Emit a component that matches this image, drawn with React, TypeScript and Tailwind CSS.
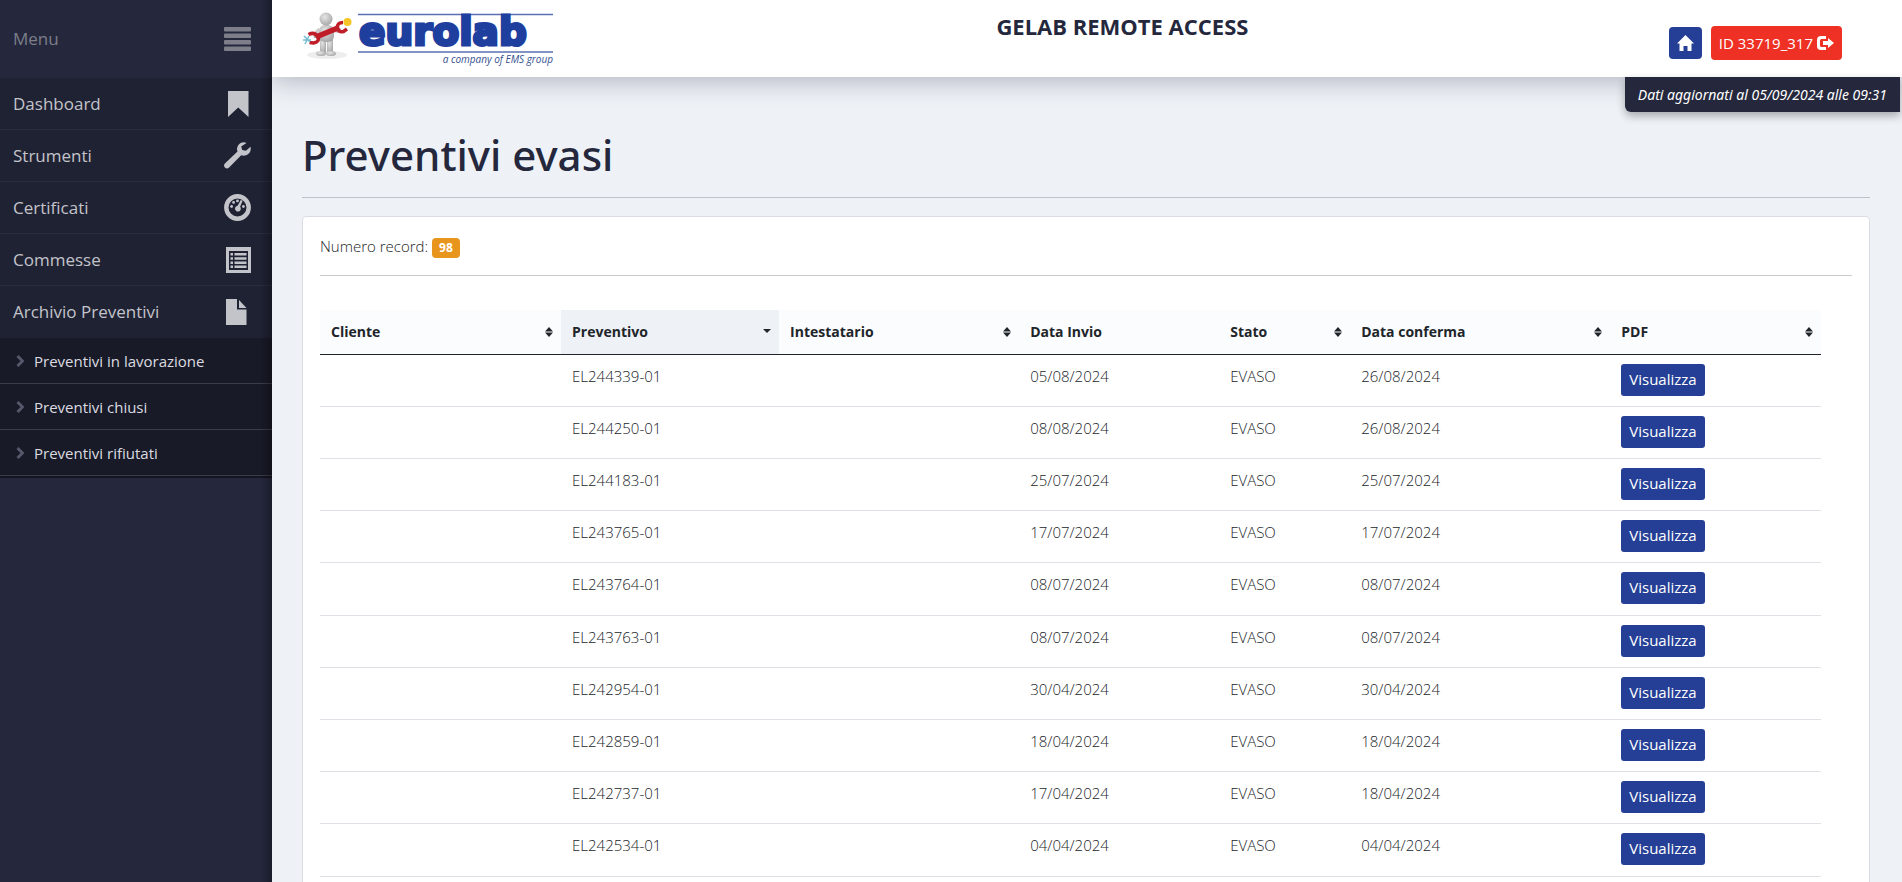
import type { ReactNode } from "react";

type MenuItem = { label: string; icon: ReactNode };

const icons = {
  bookmark: (
    <svg viewBox="0 0 26 26" className="h-[26px] w-[26px]" fill="currentColor">
      <path d="M3 0h20.500v26L13.250 16.500 3 26z" />
    </svg>
  ),
  wrench: (
    <svg viewBox="0 0 27 27" className="h-[27px] w-[27px]" fill="currentColor">
      <path d="M22.500 .9C19.500 -.4 16 .5 14.200 3.200 12.800 5.300 12.700 7.500 13.500 9.600L.9 21.400c-1.200 1.200-1.200 2.900 0 4.100s3 1.200 4.200 0L17.200 13.200c2.400.9 5 .5 7-1.200 2.200-1.900 3-4.600 2.300-7.200l-4.600 4-3.700-.8-1-3.600z" />
    </svg>
  ),
  gauge: (
    <svg viewBox="0 0 27 27" className="h-[27px] w-[27px]" fill="currentColor">
      <circle cx="13.500" cy="13.500" r="11.200" fill="none" stroke="currentColor" strokeWidth="4.400" />
      <circle cx="7.600" cy="12.500" r="1.400" />
      <circle cx="9.600" cy="8.400" r="1.400" />
      <circle cx="13.500" cy="6.900" r="1.400" />
      <circle cx="19.400" cy="12.500" r="1.400" />
      <path d="M16.800 6l1.800.8-2.500 6a2.900 2.900 0 1 1-2.500-1z" />
    </svg>
  ),
  list: (
    <svg viewBox="0 0 26 26" className="h-[26px] w-[26px]" fill="currentColor">
      <path fillRule="evenodd" d="M1 0h25v26H1zM4 4v19h19V4z" />
      <path d="M5.500 6h2.500v2.500H5.500zM9.500 6h12v2.500h-12zM5.500 10.200h2.500v2.500H5.500zM9.500 10.200h12v2.500h-12zM5.500 14.400h2.500v2.500H5.500zM9.500 14.400h12v2.500h-12zM5.500 18.600h2.500v2.500H5.500zM9.500 18.600h12v2.500h-12z" />
    </svg>
  ),
  file: (
    <svg viewBox="0 0 26 26" className="h-[26px] w-[26px]" fill="currentColor">
      <path d="M1 0h11v10.500h9.500V26H1z" />
      <path d="M14 1l7.500 8H14z" />
    </svg>
  ),
};

const menu: MenuItem[] = [
  { label: "Dashboard", icon: icons.bookmark },
  { label: "Strumenti", icon: icons.wrench },
  { label: "Certificati", icon: icons.gauge },
  { label: "Commesse", icon: icons.list },
  { label: "Archivio Preventivi", icon: icons.file },
];

const submenu = ["Preventivi in lavorazione", "Preventivi chiusi", "Preventivi rifiutati"];

const columns = [
  { label: "Cliente", width: "w-[241px]", sort: "both" },
  { label: "Preventivo", width: "w-[218px]", sort: "desc" },
  { label: "Intestatario", width: "w-[240px]", sort: "both" },
  { label: "Data Invio", width: "w-[200px]", sort: "none" },
  { label: "Stato", width: "w-[131px]", sort: "both" },
  { label: "Data conferma", width: "w-[260px]", sort: "both" },
  { label: "PDF", width: "w-[211px]", sort: "both" },
];

const quotes = [
  { code: "EL244339-01", sent: "05/08/2024", confirmed: "26/08/2024" },
  { code: "EL244250-01", sent: "08/08/2024", confirmed: "26/08/2024" },
  { code: "EL244183-01", sent: "25/07/2024", confirmed: "25/07/2024" },
  { code: "EL243765-01", sent: "17/07/2024", confirmed: "17/07/2024" },
  { code: "EL243764-01", sent: "08/07/2024", confirmed: "08/07/2024" },
  { code: "EL243763-01", sent: "08/07/2024", confirmed: "08/07/2024" },
  { code: "EL242954-01", sent: "30/04/2024", confirmed: "30/04/2024" },
  { code: "EL242859-01", sent: "18/04/2024", confirmed: "18/04/2024" },
  { code: "EL242737-01", sent: "17/04/2024", confirmed: "18/04/2024" },
  { code: "EL242534-01", sent: "04/04/2024", confirmed: "04/04/2024" },
];

function Sidebar() {
  return (
    <nav className="relative z-20 w-[272px] shrink-0 bg-[#25283d]">
      <div className="flex h-[78px] items-center justify-between pr-[21px] pl-[13px] text-[17px] text-[#7d7e8a]">
        Menu
        <svg viewBox="0 0 27 24" className="h-6 w-[27px]" fill="currentColor">
          <rect width="27" height="4.500" rx="1" />
          <rect y="6.500" width="27" height="4.500" rx="1" />
          <rect y="13" width="27" height="4.500" rx="1" />
          <rect y="19.500" width="27" height="4.500" rx="1" />
        </svg>
      </div>
      <ul className="bg-black/15">
        {menu.map((item) => (
          <li key={item.label} className="border-b border-white/5 last:border-transparent">
            <a href="#" className="flex h-[51px] items-center justify-between pr-[21px] pl-[13px] text-[17px] text-[#c3c4ca]">
              {item.label}
              {item.icon}
            </a>
          </li>
        ))}
      </ul>
      <ul className="border-b-2 border-black/15 bg-black/35">
        {submenu.map((label) => (
          <li key={label} className="border-b border-white/15">
            <a href="#" className="flex h-[45px] items-center gap-[10px] pt-px pl-4 text-[15px] text-[#dcdce0]">
              <svg viewBox="0 0 8 12" className="h-3 w-2" fill="none" stroke="#55576a" strokeWidth="3">
                <path d="M1.500 1L6.500 6l-5 5" />
              </svg>
              {label}
            </a>
          </li>
        ))}
      </ul>
      <div className="pointer-events-none absolute inset-y-0 right-0 w-3 bg-linear-to-l from-black/30 to-transparent" />
    </nav>
  );
}

function Logo() {
  return (
    <svg viewBox="0 0 254 68" className="h-[68px] w-[254px]" role="img" aria-label="eurolab">
      <defs>
        <radialGradient id="body" cx="0.4" cy="0.35" r="0.7">
          <stop offset="0" stopColor="#e6e6e6" />
          <stop offset="1" stopColor="#a4a4a4" />
        </radialGradient>
      </defs>
      <ellipse cx="24" cy="51" rx="20" ry="4" fill="#ededed" />
      <g fill="url(#body)">
        <path d="M16 24c-4 2-6 6-5 10h4l3-5zM30 24c3-1 6-1 8 1l-2 4-6-1z" />
        <rect x="17" y="32" width="6" height="18" rx="3" />
        <rect x="24" y="32" width="6" height="18" rx="3" />
        <ellipse cx="18" cy="49.500" rx="5" ry="2.500" />
        <ellipse cx="28" cy="49.500" rx="5" ry="2.500" />
        <rect x="16" y="21" width="15" height="17" rx="6" />
        <circle cx="23" cy="15" r="6.500" />
      </g>
      <path d="M13 33L36 23.500" stroke="#bf1e28" strokeWidth="5.500" />
      <path d="M5.500 30.500q6-3 9 2t-4 6.500l-4-.5" fill="none" stroke="#bf1e28" strokeWidth="3.500" />
      <path d="M40 18.500q-6 0-5.500 5t6 4l3.500-2.500" fill="none" stroke="#bf1e28" strokeWidth="3.500" />
      <circle cx="44.500" cy="18" r="4" fill="#f7c427" />
      <path d="M1 32l6 6M6 32l-4 8M0 36h8" stroke="#76bdd4" strokeWidth="1.500" />
      <path d="M55 10.500h195M55 48h195" stroke="#5a70b4" strokeWidth="1.500" />
      <text
        x="56"
        y="41"
        fontSize="39"
        fontWeight="700"
        fill="#1f3f9f"
        stroke="#1f3f9f"
        strokeWidth="3"
        className="font-['DejaVu_Sans']"
      >
        eurolab
      </text>
      <text x="250" y="59" textAnchor="end" fontSize="10" fontStyle="italic" fill="#34508f" className="font-['Open_Sans']">
        a company of EMS group
      </text>
    </svg>
  );
}

function Header() {
  return (
    <header className="relative z-10 grid h-[77px] grid-cols-12 items-start bg-white pr-[60px] shadow-[0_4px_24px_rgba(37,40,61,0.3)]">
      <div className="col-span-4 pt-1 pl-[31px]">
        <Logo />
      </div>
      <h2 className="col-span-5 pt-3 text-center text-[22px] leading-7 font-bold text-[#25283d]">
        GELAB REMOTE ACCESS
      </h2>
      <div className="col-span-3 flex items-center justify-end gap-[9px] pt-[26px]">
        <button type="button" aria-label="Home" className="flex h-8 w-[33px] items-center justify-center rounded bg-[#253f96] text-white">
          <svg viewBox="0 0 17 16" className="h-4 w-[17px]" fill="currentColor">
            <path d="M8.500 0L17 8.500h-2.500V16H10.500v-5h-4v5H2.500V8.500H0z" />
          </svg>
        </button>
        <button type="button" className="flex h-[34px] items-center gap-1 rounded bg-[#ee3124] px-2 text-[15px] text-white">
          ID 33719_317
          <svg viewBox="0 0 17 14" className="h-[14px] w-[17px]" fill="currentColor">
            <path d="M9 0v3H4.500Q3 3 3 4.500v5Q3 11 4.500 11H9v3H4Q0 14 0 10V4Q0 0 4 0z" />
            <path d="M11 2l6 5-6 5V9H6V5h5z" />
          </svg>
        </button>
      </div>
      <p className="absolute top-full right-[2px] h-[35px] rounded-bl-md bg-[#25283d] px-[13px] font-['Noto_Sans',sans-serif] text-sm leading-[35px] text-white italic shadow-[0_4px_8px_rgba(0,0,0,0.3)]">
        Dati aggiornati al 05/09/2024 alle 09:31
      </p>
    </header>
  );
}

function SortIcon({ sort }: { sort: string }) {
  if (sort === "none") return null;
  return (
    <svg viewBox="0 0 8 10" className="h-[10px] w-2" fill="#212529">
      {sort === "both" ? <path d="M4 0l4 4.500H0zM0 5.500h8L4 10z" /> : <path d="M0 2h8L4 6z" />}
    </svg>
  );
}

function QuotesTable() {
  return (
    <table className="mt-[34px] w-[98%] table-fixed text-left text-[15px]">
      <thead>
        <tr className="h-[44px] border-b border-[#212529] bg-[#fafcfe] text-sm text-[#212529]">
          {columns.map((col) => (
            <th
              key={col.label}
              className={`${col.width} pr-2 pl-[11px] font-bold ${col.sort === "desc" ? "bg-[#eef2f7]" : ""}`}
            >
              <div className="flex items-center justify-between">
                {col.label}
                <SortIcon sort={col.sort} />
              </div>
            </th>
          ))}
        </tr>
      </thead>
      <tbody>
        {quotes.map((quote) => (
          <tr key={quote.code} className="h-[52px] border-b border-[#dee2e6] align-top text-[#212529] nth-[5n]:h-[53px]">
            <td />
            <td className="pt-[10px] pl-[11px] font-light">{quote.code}</td>
            <td />
            <td className="pt-[10px] pl-[11px] font-light">{quote.sent}</td>
            <td className="pt-[10px] pl-[11px] font-light">EVASO</td>
            <td className="pt-[10px] pl-[11px] font-light">{quote.confirmed}</td>
            <td className="pt-[9px] pl-[11px]">
              <button type="button" className="h-8 rounded-[3px] bg-[#253f96] px-2 text-white">
                Visualizza
              </button>
            </td>
          </tr>
        ))}
      </tbody>
    </table>
  );
}

function App() {
  return (
    <div className="flex h-screen overflow-hidden bg-[#eef2f7] font-['Open_Sans','Noto_Sans',sans-serif]">
      <Sidebar />
      <div className="min-w-0 flex-1">
        <Header />
        <main className="pr-8 pl-[30px]">
          <h1 className="border-b border-[#bcc1cc] pt-[50px] pb-[14px] font-['Noto_Sans',sans-serif] text-[42px] leading-[56px] font-medium text-[#25283d]">
            Preventivi evasi
          </h1>
          <section className="mt-[18px] rounded border border-[#d9dde3] bg-white px-[17px] pt-[21px] pb-5">
            <p className="flex h-[38px] items-start gap-1 border-b border-[#c8cacd] text-[15px] leading-4 font-light text-[#212529]">
              Numero record:
              <span className="rounded bg-[#e8951e] px-[7px] text-xs leading-5 font-bold text-white">98</span>
            </p>
            <QuotesTable />
          </section>
        </main>
      </div>
    </div>
  );
}

export default App;
